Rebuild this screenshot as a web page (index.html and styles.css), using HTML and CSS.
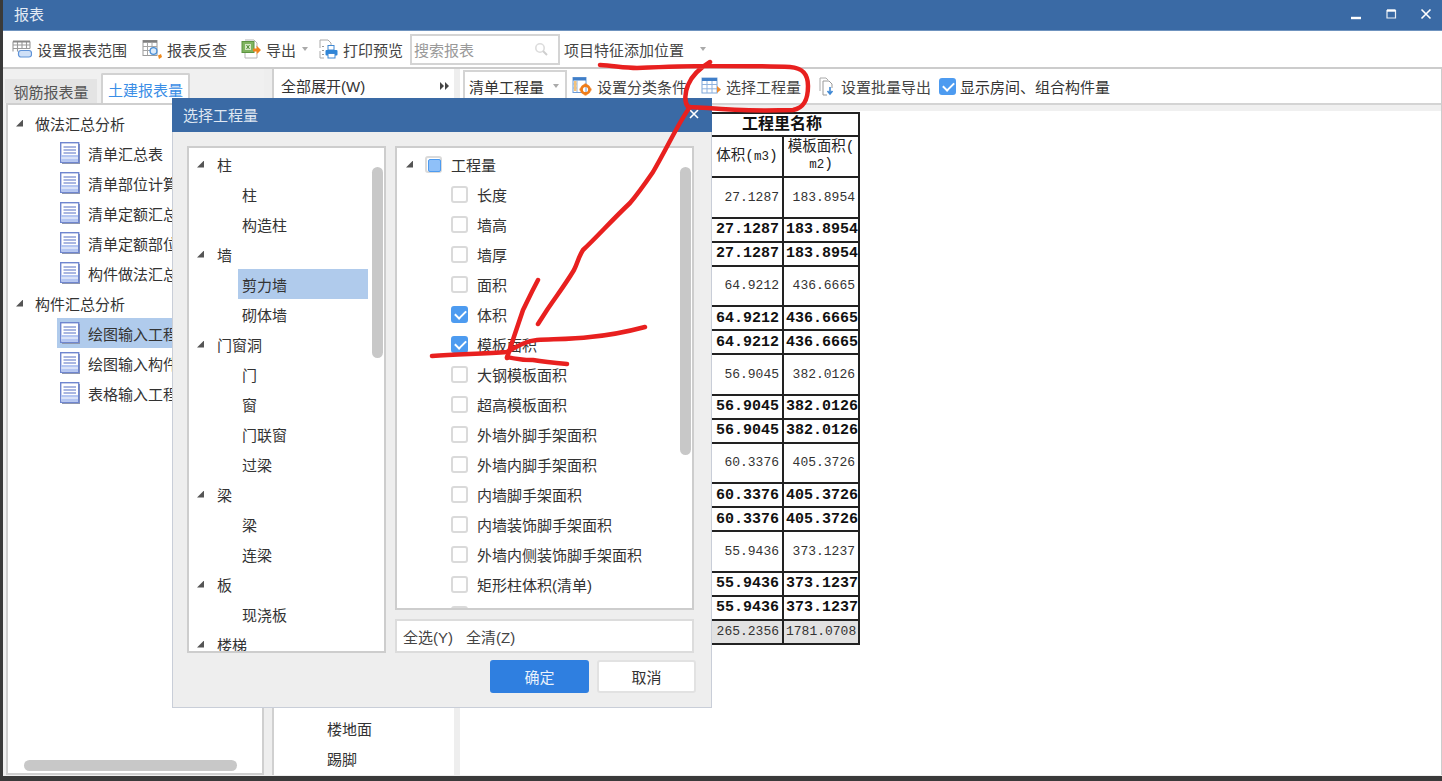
FILE: index.html
```html
<!DOCTYPE html>
<html lang="zh-CN">
<head>
    <meta charset="UTF-8">
    <meta name="viewport" content="width=device-width, initial-scale=1.0">
    <title>报表</title>
    <link rel="stylesheet" href="styles.css">
</head>
<body>
    <svg class="defs" width="0" height="0">
        <symbol id="icon-doc" viewBox="0 0 20 22">
            <rect x="2" y="2" width="18" height="20" fill="#8f97ad"/>
            <rect x="0.7" y="0.7" width="18" height="19.6" fill="#fff" stroke="#6f86cf" stroke-width="1.4"/>
            <path d="M3.5 5h12.5M3.5 8h12.5M3.5 11h12.5" stroke="#8d9fd8" stroke-width="1.3"/>
            <rect x="1.4" y="13" width="16.6" height="6.6" fill="#b4c6f2"/>
            <path d="M1.4 16h16.6" stroke="#fff" stroke-width="1"/>
        </symbol>
    </svg>

    <div class="window">
        <header class="titlebar">
            <span class="titlebar-text">报表</span>
            <div class="window-controls">
                <span class="window-btn"><svg width="12" height="12" viewBox="0 0 12 12"><path d="M1 10h10" stroke="#fff" stroke-width="2.4"/></svg></span>
                <span class="window-btn"><svg width="12" height="12" viewBox="0 0 12 12"><path d="M2 2.5h8.5v7.5h-8.5z" fill="none" stroke="#e8eef6" stroke-width="1.2"/><path d="M2 2.5h8.5" stroke="#fff" stroke-width="2.4"/></svg></span>
                <span class="window-btn"><svg width="12" height="12" viewBox="0 0 12 12"><path d="M1.5 1.5l9 9M10.5 1.5l-9 9" stroke="#fff" stroke-width="1.6"/></svg></span>
            </div>
        </header>

        <div class="toolbar">
            <div class="tool tool-range">
                <svg width="20" height="20" viewBox="0 0 20 20"><path d="M1 2.5h17M1 6h17M1 9.5h17M1 2.5v10M5.5 2.5v10M10 2.5v7M14.500 2.500v7M18 2.500v7" fill="none" stroke="#9a9a9a" stroke-width="1.1"/><path d="M1 2.500h17" stroke="#8a8a8a" stroke-width="2"/><rect x="6.500" y="11.500" width="13" height="6.500" rx="2.500" fill="#cfe0f7" stroke="#5f93d8" stroke-width="1.200"/></svg>
                <span>设置报表范围</span>
            </div>
            <div class="tool tool-lookup">
                <svg width="20" height="20" viewBox="0 0 20 20"><rect x="1" y="1.500" width="14" height="15" fill="#fff" stroke="#9a9a9a"/><path d="M1 2.500h14" stroke="#7f7f7f" stroke-width="2.500"/><path d="M1 7.500h14M1 11.500h7M5.500 4v12.500M10 4v4" stroke="#a5a5a5"/><circle cx="11.500" cy="12" r="3.400" fill="#dcebfa" stroke="#4a8ed6" stroke-width="1.300"/><path d="M16 16.500l3-1.500 1 3-3 2z" fill="#f08a1c"/></svg>
                <span>报表反查</span>
            </div>
            <div class="tool tool-export">
                <svg width="20" height="20" viewBox="0 0 20 20"><path d="M4 1h9l3 3v4M16 15v4h-12v-5" fill="none" stroke="#b5b5b5"/><rect x="1" y="2.500" width="12" height="11" fill="#7fb35f" stroke="#5c9440"/><rect x="4" y="5" width="6" height="6" fill="#d6e8c6"/><path d="M5.500 6l3 4M8.500 6l-3 4" stroke="#4d8a34"/><path d="M12 9.500h3.500v-3l4.500 4.500-4.500 4.500v-3h-3.500z" fill="#f0821c"/></svg>
                <span>导出</span>
                <i class="caret"></i>
            </div>
            <div class="tool tool-print">
                <svg width="20" height="20" viewBox="0 0 20 20"><path d="M2 9v-8h8l3 3v3M2 12v7h4" fill="none" stroke="#aaa"/><path d="M5 7v1M5 11v1M5 15v1" stroke="#777" stroke-width="1.500"/><rect x="10" y="6.500" width="6" height="4.500" fill="#fff" stroke="#3f88d4"/><rect x="7.500" y="11" width="12" height="5.500" rx="1" fill="#2f86d8"/><rect x="10" y="14.500" width="7" height="4.500" fill="#fff" stroke="#3f88d4"/></svg>
                <span>打印预览</span>
            </div>
            <div class="search-box">
                <span class="search-placeholder">搜索报表</span>
                <svg width="14" height="14" viewBox="0 0 14 14"><circle cx="6" cy="6" r="4.200" fill="none" stroke="#dcdcdc" stroke-width="1.600"/><path d="M9 9l4 4" stroke="#cfcfcf" stroke-width="2"/></svg>
            </div>
            <div class="tool tool-position">
                <span>项目特征添加位置</span>
                <i class="caret"></i>
            </div>
        </div>

        <main class="workspace">
            <section class="left-col">
                <div class="tabs">
                    <span class="tab">钢筋报表量</span>
                    <span class="tab tab-active">土建报表量</span>
                </div>
                <div class="report-tree">
                    <div class="tree-row"><i class="arrow"></i><span>做法汇总分析</span></div>
                    <div class="tree-row tree-leaf"><svg class="doc" width="20" height="22"><use href="#icon-doc"/></svg><span>清单汇总表</span></div>
                    <div class="tree-row tree-leaf"><svg class="doc" width="20" height="22"><use href="#icon-doc"/></svg><span>清单部位计算书</span></div>
                    <div class="tree-row tree-leaf"><svg class="doc" width="20" height="22"><use href="#icon-doc"/></svg><span>清单定额汇总表</span></div>
                    <div class="tree-row tree-leaf"><svg class="doc" width="20" height="22"><use href="#icon-doc"/></svg><span>清单定额部位计算书</span></div>
                    <div class="tree-row tree-leaf"><svg class="doc" width="20" height="22"><use href="#icon-doc"/></svg><span>构件做法汇总表</span></div>
                    <div class="tree-row"><i class="arrow"></i><span>构件汇总分析</span></div>
                    <div class="tree-row tree-leaf tree-leaf-selected"><svg class="doc" width="20" height="22"><use href="#icon-doc"/></svg><span>绘图输入工程量汇总表</span></div>
                    <div class="tree-row tree-leaf"><svg class="doc" width="20" height="22"><use href="#icon-doc"/></svg><span>绘图输入构件工程量计算书</span></div>
                    <div class="tree-row tree-leaf"><svg class="doc" width="20" height="22"><use href="#icon-doc"/></svg><span>表格输入工程量计算书</span></div>
                    <div class="tree-scroll"></div>
                </div>
            </section>

            <div class="splitter"></div>

            <section class="filter-col">
                <div class="filter-head">
                    <span>全部展开(W)</span>
                    <svg width="10" height="8" viewBox="0 0 10 8"><path d="M0 0l4 4-4 4zM5 0l4 4-4 4z" fill="#444"/></svg>
                </div>
                <div class="filter-list">
                    <div class="filter-item">楼地面</div>
                    <div class="filter-item">踢脚</div>
                </div>
            </section>

            <div class="splitter splitter-thin"></div>

            <section class="report-col">
                <div class="report-bar">
                    <div class="combo"><span>清单工程量</span><i class="caret"></i></div>
                    <div class="tool tool-class">
                        <svg width="20" height="20" viewBox="0 0 20 20"><rect x="1" y="1.500" width="13" height="15" fill="#fff" stroke="#6f9bd4"/><path d="M1 3h13" stroke="#3f7ec8" stroke-width="3"/><path d="M5 4v12M1 8h4M1 12h4" stroke="#8fb2de"/><rect x="2" y="5" width="2.500" height="10" fill="#f4c27a"/><circle cx="13.500" cy="13.500" r="4" fill="none" stroke="#ef7d1a" stroke-width="2.800"/><path d="M13.500 7.500v2M13.500 17.500v2M7.500 13.500h2M17.500 13.500h2" stroke="#ef7d1a" stroke-width="2"/></svg>
                        <span>设置分类条件</span>
                    </div>
                    <div class="tool tool-pick">
                        <svg width="20" height="20" viewBox="0 0 20 20"><rect x="1" y="2" width="15" height="15" fill="#fff" stroke="#7ea6d8"/><path d="M1 3.500h15" stroke="#3f7ec8" stroke-width="3"/><path d="M1 8.500h15M1 12.800h15M6 5v12M11 5v12" stroke="#8fb2de"/><path d="M16 10l4 3.500-4 3.500z" fill="#ef8a2a"/></svg>
                        <span>选择工程量</span>
                    </div>
                    <div class="tool tool-batch">
                        <svg width="20" height="20" viewBox="0 0 20 20"><path d="M4 15v-13h6l2 2" fill="none" stroke="#aaa"/><path d="M7 19v-14h6l3 3v4M7 19h4" fill="#fff" stroke="#999"/><path d="M14 11v6M11.500 15l2.500 3 2.500-3" fill="none" stroke="#3f88d4" stroke-width="1.600"/></svg>
                        <span>设置批量导出</span>
                    </div>
                    <label class="show-rooms"><i class="check check-on"></i><span>显示房间、组合构件量</span></label>
                </div>
                <div class="report-sheet">
                    <table class="qty-table">
                        <colgroup><col class="col-vol"><col class="col-form"></colgroup>
                        <tr class="row-title"><th colspan="2">工程里名称</th></tr>
                        <tr class="row-head"><td>体积(<span class="mono">m3</span>)</td><td>模板面积(<br><span class="mono">m2</span>)</td></tr>
                        <tr class="row-plain"><td>27.1287</td><td>183.8954</td></tr>
                        <tr class="row-bold"><td>27.1287</td><td>183.8954</td></tr>
                        <tr class="row-bold"><td>27.1287</td><td>183.8954</td></tr>
                        <tr class="row-plain"><td>64.9212</td><td>436.6665</td></tr>
                        <tr class="row-bold"><td>64.9212</td><td>436.6665</td></tr>
                        <tr class="row-bold"><td>64.9212</td><td>436.6665</td></tr>
                        <tr class="row-plain"><td>56.9045</td><td>382.0126</td></tr>
                        <tr class="row-bold"><td>56.9045</td><td>382.0126</td></tr>
                        <tr class="row-bold"><td>56.9045</td><td>382.0126</td></tr>
                        <tr class="row-plain"><td>60.3376</td><td>405.3726</td></tr>
                        <tr class="row-bold"><td>60.3376</td><td>405.3726</td></tr>
                        <tr class="row-bold"><td>60.3376</td><td>405.3726</td></tr>
                        <tr class="row-plain"><td>55.9436</td><td>373.1237</td></tr>
                        <tr class="row-bold"><td>55.9436</td><td>373.1237</td></tr>
                        <tr class="row-bold"><td>55.9436</td><td>373.1237</td></tr>
                        <tr class="row-total"><td>265.2356</td><td>1781.0708</td></tr>
                    </table>
                </div>
            </section>
        </main>

        <!-- 选择工程量 弹窗 -->
        <div class="dialog">
            <div class="dialog-title">
                <span>选择工程量</span>
                <svg width="10" height="10" viewBox="0 0 10 10"><path d="M1 1l8 8M9 1l-8 8" stroke="#fff" stroke-width="1.600"/></svg>
            </div>
            <div class="dialog-body">
                <div class="dialog-lists">
                    <div class="list list-types">
                        <div class="list-row"><i class="arrow"></i><span>柱</span></div>
                        <div class="list-row list-child"><span>柱</span></div>
                        <div class="list-row list-child"><span>构造柱</span></div>
                        <div class="list-row"><i class="arrow"></i><span>墙</span></div>
                        <div class="list-row list-child list-selected"><span>剪力墙</span></div>
                        <div class="list-row list-child"><span>砌体墙</span></div>
                        <div class="list-row"><i class="arrow"></i><span>门窗洞</span></div>
                        <div class="list-row list-child"><span>门</span></div>
                        <div class="list-row list-child"><span>窗</span></div>
                        <div class="list-row list-child"><span>门联窗</span></div>
                        <div class="list-row list-child"><span>过梁</span></div>
                        <div class="list-row"><i class="arrow"></i><span>梁</span></div>
                        <div class="list-row list-child"><span>梁</span></div>
                        <div class="list-row list-child"><span>连梁</span></div>
                        <div class="list-row"><i class="arrow"></i><span>板</span></div>
                        <div class="list-row list-child"><span>现浇板</span></div>
                        <div class="list-row"><i class="arrow"></i><span>楼梯</span></div>
                        <div class="thumb thumb-types"></div>
                    </div>
                    <div class="qty-col">
                        <div class="list list-qty">
                            <div class="qty-row"><i class="arrow"></i><i class="check check-part"></i><span>工程量</span></div>
                            <div class="qty-row qty-child"><i class="check"></i><span>长度</span></div>
                            <div class="qty-row qty-child"><i class="check"></i><span>墙高</span></div>
                            <div class="qty-row qty-child"><i class="check"></i><span>墙厚</span></div>
                            <div class="qty-row qty-child"><i class="check"></i><span>面积</span></div>
                            <div class="qty-row qty-child"><i class="check check-on"></i><span>体积</span></div>
                            <div class="qty-row qty-child"><i class="check check-on"></i><span>模板面积</span></div>
                            <div class="qty-row qty-child"><i class="check"></i><span>大钢模板面积</span></div>
                            <div class="qty-row qty-child"><i class="check"></i><span>超高模板面积</span></div>
                            <div class="qty-row qty-child"><i class="check"></i><span>外墙外脚手架面积</span></div>
                            <div class="qty-row qty-child"><i class="check"></i><span>外墙内脚手架面积</span></div>
                            <div class="qty-row qty-child"><i class="check"></i><span>内墙脚手架面积</span></div>
                            <div class="qty-row qty-child"><i class="check"></i><span>内墙装饰脚手架面积</span></div>
                            <div class="qty-row qty-child"><i class="check"></i><span>外墙内侧装饰脚手架面积</span></div>
                            <div class="qty-row qty-child"><i class="check"></i><span>矩形柱体积(清单)</span></div>
                            <div class="qty-row qty-child"><i class="check"></i><span>异形柱体积(清单)</span></div>
                            <div class="thumb thumb-qty"></div>
                        </div>
                        <div class="select-bar">
                            <span class="select-btn">全选(Y)</span>
                            <span class="select-btn">全清(Z)</span>
                        </div>
                    </div>
                </div>
                <div class="dialog-actions">
                    <button class="btn btn-primary">确定</button>
                    <button class="btn">取消</button>
                </div>
            </div>
        </div>
    </div>

    <!-- 截图上的手绘红线 -->
    <svg class="scribble" width="1442" height="781" viewBox="0 0 1442 781">
        <g fill="none" stroke="#e8201f" stroke-width="4.5" stroke-linecap="round" stroke-linejoin="round">
            <path d="M600 65C615 66 625 68 637 68C660 67 690 66 710 66C740 66 770 66 790 67C803 68 808 74 808 86C808 100 804 108 793 110C760 111 730 110 708 108L688 107C684 102 685 92 688 85C692 75 700 68 710 62"/>
            <path d="M690 107C680 120 668 146 653 172C642 188 636 196 630 203C612 220 596 238 583 250C578 258 578 262 574 270C565 285 555 298 547 310L538 324"/>
            <path d="M538 280C530 295 526 304 523 310C518 325 512 342 507 358"/>
            <path d="M432 356C460 354 485 354 507 352C518 346 526 341 537 340C560 339 575 339 590 337C612 335 630 331 645 327"/>
            <path d="M507 357C515 359 524 360 533 360C545 362 556 363 567 364"/>
        </g>
    </svg>
</body>
</html>
```

FILE: styles.css
```css
* {
    box-sizing: border-box;
}

html, body {
    height: 100%;
}

body {
    margin: 0;
    overflow: hidden;
    background-color: #3a3a3a;
    color: #333;
    font-family: "Liberation Sans", "Noto Sans CJK SC", sans-serif;
    font-size: 15px;
}

.defs {
    position: absolute;
}

.window {
    position: relative;
    margin-left: 3px;
    height: 776px;
    display: flex;
    flex-direction: column;
    background-color: #f0f0f0;
}

/* Titelleiste */
.titlebar {
    height: 31px;
    flex: none;
    display: flex;
    align-items: center;
    justify-content: space-between;
    padding: 0 1px 3px 11px;
    background-color: #3a6aa5;
    border-bottom: 1px solid #6f93bf;
    color: #e4ebf4;
}

.window-controls {
    display: flex;
    gap: 5px;
}

.window-btn {
    width: 30px;
    display: flex;
    justify-content: center;
}

/* Werkzeugleiste */
.toolbar {
    height: 38px;
    flex: none;
    display: flex;
    align-items: center;
    padding: 0 0 0 9px;
    background-color: #fff;
    border-bottom: 2px solid #cccccc;
}

.tool {
    display: flex;
    align-items: center;
    gap: 5px;
    white-space: nowrap;
    color: #444;
}

.tool-lookup { margin-left: 15px; }
.tool-export { margin-left: 14px; }
.tool-print { margin-left: 10px; }

.caret {
    width: 0;
    height: 0;
    border-left: 3.5px solid transparent;
    border-right: 3.5px solid transparent;
    border-top: 4px solid #aaa;
}

.tool-export .caret {
    margin-left: 1px;
}

.search-box {
    width: 150px;
    height: 31px;
    margin-left: 7px;
    display: flex;
    align-items: center;
    justify-content: space-between;
    padding: 0 10px 0 2px;
    border: 2px solid #d4d4d4;
}

.search-placeholder {
    color: #999;
}

.tool-position {
    margin-left: 4px;
    gap: 16px;
}

/* Arbeitsbereich */
.workspace {
    flex: 1;
    display: flex;
    min-height: 0;
    padding-bottom: 1px;
}

.left-col {
    width: 261px;
    flex: none;
    display: flex;
    flex-direction: column;
    padding-left: 3px;
}

.tabs {
    height: 34px;
    flex: none;
    display: flex;
    align-items: flex-end;
    gap: 4px;
    margin-left: -1px;
}

.tab {
    height: 24px;
    width: 92px;
    display: flex;
    align-items: center;
    justify-content: center;
    background-color: #e4e4e4;
    color: #555;
}

.tab-active {
    height: 30px;
    width: 89px;
    background-color: #fff;
    border: 2px solid #d2d2d2;
    border-bottom: none;
    border-radius: 2px 2px 0 0;
    color: #3a8ee6;
}

.report-tree {
    position: relative;
    flex: 1;
    padding-top: 3px;
    background-color: #fff;
    border: 2px solid #cfcfcf;
    overflow: hidden;
}

.tree-row {
    height: 30px;
    display: flex;
    align-items: center;
    gap: 12px;
    padding-left: 8px;
    white-space: nowrap;
}

.arrow {
    width: 7px;
    height: 7px;
    flex: none;
    background-color: #555;
    clip-path: polygon(100% 0, 100% 100%, 0 100%);
}

.tree-leaf {
    margin-left: 49px;
    padding-left: 3px;
    gap: 8px;
}

.tree-leaf-selected {
    background-color: #b0cbec;
}

.doc {
    flex: none;
}

.tree-scroll {
    position: absolute;
    left: 16px;
    bottom: 2px;
    width: 213px;
    height: 11px;
    border-radius: 6px;
    background-color: #c8c8c8;
}

.splitter {
    width: 8px;
    flex: none;
    background-color: #eeeeee;
}

.splitter-thin {
    width: 6px;
}

.filter-col {
    width: 182px;
    flex: none;
    display: flex;
    flex-direction: column;
    justify-content: space-between;
    background-color: #fff;
    border-left: 2px solid #d0d0d0;
}

.filter-head {
    height: 33px;
    display: flex;
    align-items: center;
    justify-content: space-between;
    padding: 0 4px 0 7px;
}

.filter-list {
    padding: 0 0 0 53px;
}

.filter-item {
    height: 30px;
    line-height: 30px;
}

.report-col {
    flex: 1;
    display: flex;
    flex-direction: column;
    min-width: 0;
    border-right: 1px solid #cccccc;
}

.report-bar {
    height: 36px;
    flex: none;
    display: flex;
    align-items: center;
    padding-left: 3px;
    background-color: #fff;
    border-bottom: 2px solid #d4d4d4;
}

.combo {
    width: 104px;
    height: 33px;
    display: flex;
    align-items: center;
    justify-content: space-between;
    padding: 0 6px 0 4px;
    border: 2px solid #d4d4d4;
}

.tool-class { margin-left: 5px; }
.tool-pick { margin-left: 14px; }
.tool-batch { margin-left: 15px; }

.show-rooms {
    display: flex;
    align-items: center;
    gap: 4px;
    margin-left: 8px;
    color: #333;
}

.check {
    position: relative;
    display: block;
    width: 17px;
    height: 17px;
    flex: none;
    background-color: #fff;
    border: 2px solid #dadada;
    border-radius: 3px;
}

.check-on {
    background-color: #4d9bf0;
    border-color: #4d9bf0;
}

.check-on::after {
    content: "";
    position: absolute;
    left: 3.5px;
    top: 0.5px;
    width: 5px;
    height: 9px;
    border: solid #fff;
    border-width: 0 2px 2px 0;
    transform: rotate(45deg);
}

.check-part::after {
    content: "";
    position: absolute;
    left: 1px;
    top: 1px;
    width: 11px;
    height: 11px;
    border-radius: 2px;
    background-color: #8fc0f8;
    border: 1px solid #4d9bf0;
}

.report-sheet {
    flex: 1;
    padding-top: 7px;
    background: linear-gradient(#f0f0f0 6px, #fff 6px);
    min-height: 0;
}

/* Tabelle */
.qty-table {
    margin-left: 250px;
    border-collapse: collapse;
    table-layout: fixed;
    width: 148px;
    color: #111;
}

.col-vol {
    width: 72px;
}

.col-form {
    width: 76px;
}

.qty-table th,
.qty-table td {
    padding: 0 3px 0 2px;
    border: 2px solid #222;
    text-align: right;
    font-family: "Liberation Mono", "Noto Sans CJK SC", monospace;
}

.row-title th {
    height: 23px;
    text-align: center;
    font-size: 16px;
    font-weight: bold;
    line-height: 18px;
    padding: 0 6px 0 0;
}

.row-head td {
    height: 41px;
    font-size: 14.5px;
    line-height: 17px;
    text-align: center;
    padding: 0;
    color: #222;
}

.mono {
    font-size: 12.5px;
}

.row-plain td {
    height: 40.5px;
    font-size: 13px;
    color: #333;
}

.row-bold td {
    height: 24px;
    font-size: 15px;
    font-weight: bold;
}

.row-total td {
    height: 24px;
    font-size: 13px;
    background-color: #e2e2e2;
    color: #333;
}

/* Dialog */
.dialog {
    position: absolute;
    left: 169px;
    top: 98px;
    width: 540px;
    height: 610px;
    display: flex;
    flex-direction: column;
}

.dialog-title {
    height: 34px;
    flex: none;
    display: flex;
    align-items: center;
    justify-content: space-between;
    padding: 0 13px 2px 11px;
    background-color: #3a6aa5;
    color: #dfe7f2;
}

.dialog-body {
    flex: 1;
    display: flex;
    flex-direction: column;
    padding: 14px 15px 0 14px;
    background-color: #eeeeee;
    border: 1px solid #c9ced8;
    border-top: none;
}

.dialog-lists {
    display: flex;
    gap: 9px;
    height: 507px;
    flex: none;
}

.list {
    position: relative;
    overflow: hidden;
    padding-top: 1px;
    background-color: #fff;
    border: 2px solid #cdcdcd;
}

.list-types {
    width: 199px;
}

.list-row {
    height: 30px;
    flex: none;
    display: flex;
    align-items: center;
    gap: 13px;
    padding-left: 8px;
}

.list-child {
    width: 130px;
    margin-left: 49px;
    padding-left: 4px;
}

.list-selected {
    background-color: #b0cbec;
}

.thumb {
    position: absolute;
    width: 11px;
    border-radius: 6px;
    background-color: #c8c8c8;
}

.thumb-types {
    left: 183px;
    top: 19px;
    height: 191px;
}

.thumb-qty {
    left: 283px;
    top: 19px;
    height: 288px;
}

.qty-col {
    width: 299px;
    display: flex;
    flex-direction: column;
    gap: 9px;
}

.list-qty {
    height: 464px;
    flex: none;
}

.qty-row {
    height: 30px;
    display: flex;
    align-items: center;
    gap: 9px;
    padding-left: 9px;
}

.qty-row > .arrow {
    margin-right: 3px;
}

.qty-child {
    padding-left: 54px;
}

.select-bar {
    flex: 1;
    display: flex;
    align-items: center;
    gap: 13px;
    padding-left: 6px;
    background-color: #fff;
    border: 2px solid #dcdcdc;
    color: #444;
}

.dialog-actions {
    display: flex;
    justify-content: flex-end;
    gap: 8px;
    margin-top: 7px;
}

.btn {
    width: 99px;
    height: 33px;
    padding: 0;
    font: inherit;
    color: #333;
    background-color: #fff;
    border: 2px solid #e2e2e2;
    border-radius: 3px;
}

.btn-primary {
    background-color: #2f7fe0;
    border-color: #2f7fe0;
    color: #e8f1fc;
}

.scribble {
    position: absolute;
    left: 0;
    top: 0;
    pointer-events: none;
}
```
